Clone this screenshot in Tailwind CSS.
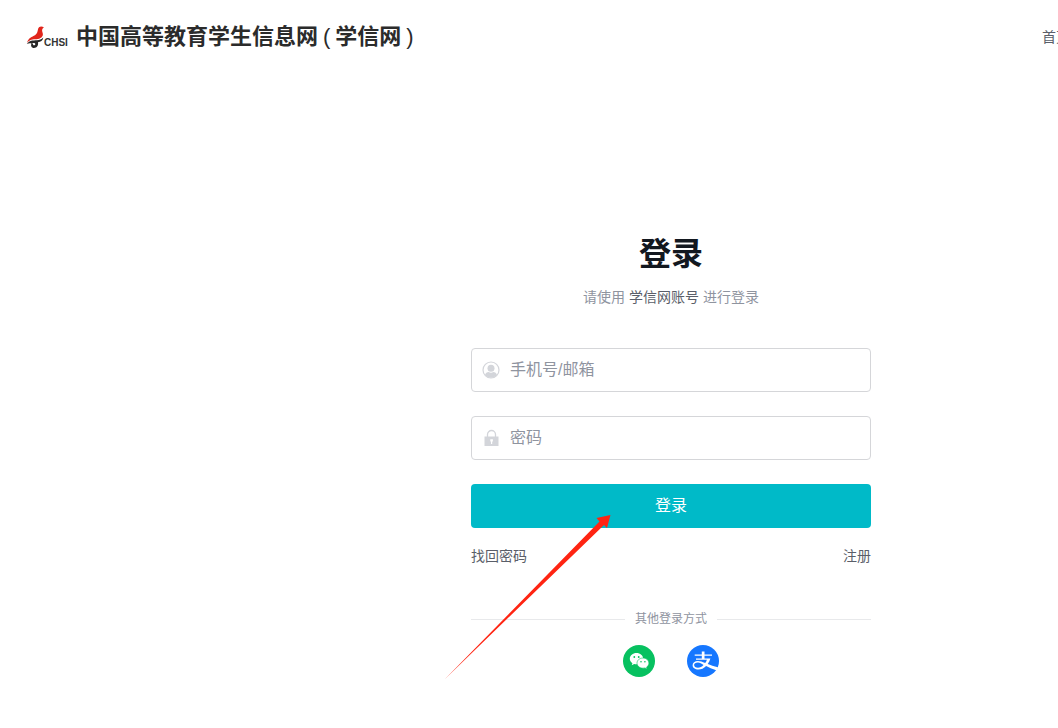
<!DOCTYPE html>
<html lang="zh-CN">
<head>
<meta charset="utf-8">
<meta name="viewport" content="width=device-width, initial-scale=1">
<title>登录 - 学信网</title>
<script src="https://cdn.jsdelivr.net/npm/@tailwindcss/browser@4"></script>
</head>
<body class="overflow-hidden bg-white font-['Liberation_Sans','Noto_Sans_CJK_SC',sans-serif] text-sm text-[#5a5e69]">
<div class="relative min-h-screen min-w-[1342px]">
  <header class="flex h-[74px] items-center pl-[26px] pr-6">
    <a href="#" class="flex items-center" aria-label="中国高等教育学生信息网(学信网)">
      <svg class="h-6 w-[18px] shrink-0" viewBox="0 0 18 24" aria-hidden="true">
        <path fill="#e1251b" d="M18 2.500C16 .8 13 1 12.200 3.500 11.600 6 11.500 8.500 9 10.300 6 12 2.500 12.500 1 18 3.500 14.500 7 14.300 10.500 14.300 14.500 14 17.500 11.500 16.800 8.500 16.200 6 15.200 4 18 2.500Z"/>
        <path fill="#262626" d="M.8 19C3 15.500 7 15.300 11 15.200 13.500 15 15.500 14.300 17.300 12.500 17 15.500 14.500 17 12 17.300 12.500 20.500 11 23 8 23 5.500 23 4.500 20.800 5.500 18.500 4 18 2.500 18.200.8 19Z"/>
        <path fill="#fff" d="M6.200 18.500C7.500 17.800 9.200 18 9.300 19.200 9.200 20.300 7.800 20.500 7.200 19.900 7.200 19.300 6.800 18.800 6.200 18.500Z"/>
      </svg>
      <span class="mt-3 w-8 text-[10px] leading-3 font-bold text-[#333]">CHSI</span>
      <span class="flex text-[22px] leading-8 font-bold text-[#2b2b2b]"><span>中国高等教育学生信息网</span><span class="px-[5px] font-normal">(</span><span>学信网</span><span class="px-[5px] font-normal">)</span></span>
    </a>
    <nav class="ml-auto mr-[248px]"><a href="#" class="text-sm">首页</a></nav>
  </header>

  <main class="mx-auto mt-[156px] w-[400px]">
    <h1 class="text-center text-[32px] leading-12 font-bold text-[#13181f]">登录</h1>
    <p class="mt-2 text-center leading-[22px] text-[#8f949f]">请使用 <span class="text-[#5a5e69]">学信网账号</span> 进行登录</p>
    <form class="mt-10" onsubmit="return false">
      <label class="flex h-11 items-center rounded border border-[#d5d6d9] pl-2.5">
        <svg class="size-[18px] shrink-0" viewBox="0 0 18 18" aria-hidden="true">
          <circle cx="9" cy="9" r="8" fill="none" stroke="#d3d5da" stroke-width="1.200"/>
          <circle cx="9" cy="7.300" r="3.500" fill="#d3d5da"/>
          <path fill="#d3d5da" d="M3 14C3.500 12 5 11.300 6.700 11 8 12 10 12 11.300 11 13 11.300 14.500 12 15 14 12 17.700 6 17.700 3 14Z"/>
        </svg>
        <input type="text" aria-label="手机号/邮箱" placeholder="手机号/邮箱" class="ml-2.5 min-w-0 flex-1 bg-transparent text-base text-[#333] outline-none placeholder:text-[#8f949f]">
      </label>
      <label class="mt-6 flex h-11 items-center rounded border border-[#d5d6d9] pl-2.5">
        <svg class="size-[18px] shrink-0" viewBox="0 0 18 18" aria-hidden="true">
          <path fill="none" stroke="#d3d5da" stroke-width="1.300" d="M5.500 8V5.500a4 4 0 0 1 8 0V8"/>
          <path fill="#d3d5da" fill-rule="evenodd" d="M2.500 7.500h14V17h-14ZM8.300 10.300v2.100h.7V15h1.200v-2.600h.7v-2.100Z"/>
        </svg>
        <input type="password" aria-label="密码" placeholder="密码" class="ml-2.5 min-w-0 flex-1 bg-transparent text-base text-[#333] outline-none placeholder:text-[#8f949f]">
      </label>
      <button type="submit" class="mt-6 h-11 w-full rounded bg-[#00bac8] text-base text-white">登录</button>
    </form>
    <div class="mt-[17px] flex justify-between leading-[22px]">
      <a href="#">找回密码</a>
      <a href="#">注册</a>
    </div>
    <div class="mt-[42px] flex items-center gap-2.5 text-xs leading-5 text-[#8f949f]">
      <span class="h-px flex-1 bg-[#e8e9eb]"></span>
      <span>其他登录方式</span>
      <span class="h-px flex-1 bg-[#e8e9eb]"></span>
    </div>
    <div class="mt-4 flex justify-center gap-8">
      <a href="#" aria-label="微信登录">
        <svg class="size-8" viewBox="0 0 32 32" aria-hidden="true">
          <circle cx="16" cy="16" r="16" fill="#07c160"/>
          <path fill="#fff" d="M13.500 8C9.800 8 6.800 10.500 6.800 13.700c0 1.900 1 3.400 2.600 4.500l-.7 2.100 2.500-1.300c.8.200 1.500.3 2.300.3 3.700 0 6.700-2.400 6.700-5.600S17.200 8 13.500 8Z"/>
          <path fill="#fff" stroke="#07c160" stroke-width=".6" d="M20 13c-3.400 0-6 2.300-6 5.100s2.600 5.100 6 5.100c.7 0 1.400-.1 2-.3l2.100 1.200-.5-2c1.400-.9 2.300-2.300 2.300-4 0-2.800-2.600-5.100-5.900-5.100Z"/>
          <g fill="#07c160"><circle cx="11.300" cy="12" r=".9"/><circle cx="15.700" cy="12" r=".9"/><circle cx="18" cy="16.800" r=".8"/><circle cx="21.900" cy="16.800" r=".8"/></g>
        </svg>
      </a>
      <a href="#" aria-label="支付宝登录">
        <svg class="size-8" viewBox="0 0 32 32" aria-hidden="true">
          <circle cx="16" cy="16" r="16" fill="#1677ff"/>
          <path fill="#fff" d="M14.800 6.500h2.700v3H25v1.300h-7.500v2.700h5.900c-.6 2.200-1.500 4.100-2.700 5.600 2.700 1.100 6.200 2.200 10.300 3.200l-1.300 3.200c-4.500-1.500-8-3.200-10.600-4.500-2.300 2.500-4.800 3.500-7.600 3.500-3.600 0-5.900-1.800-5.900-4.300s2.100-4.200 5.300-4.200c2.200 0 4.500.7 7.300 2 .8-1.100 1.400-2.200 1.700-3.300H9v-1.200h5.800v-2.700H7.700V9.500h7.100ZM11 17.500c-2.500 0-3.900 1-3.900 2.600s1.500 2.700 3.900 2.700c2 0 4-1 5.500-2.800-2-1.500-3.700-2.500-5.500-2.500Z"/>
        </svg>
      </a>
    </div>
  </main>

  <svg class="pointer-events-none absolute top-[514px] left-[444px] h-[166px] w-[168px]" viewBox="0 0 168 166" aria-hidden="true">
    <path fill="#ff2412" d="M1 165 155.500 7.500 152.500 4 166.500 1 163 14 160 11Z"/>
  </svg>
</div>
</body>
</html>
